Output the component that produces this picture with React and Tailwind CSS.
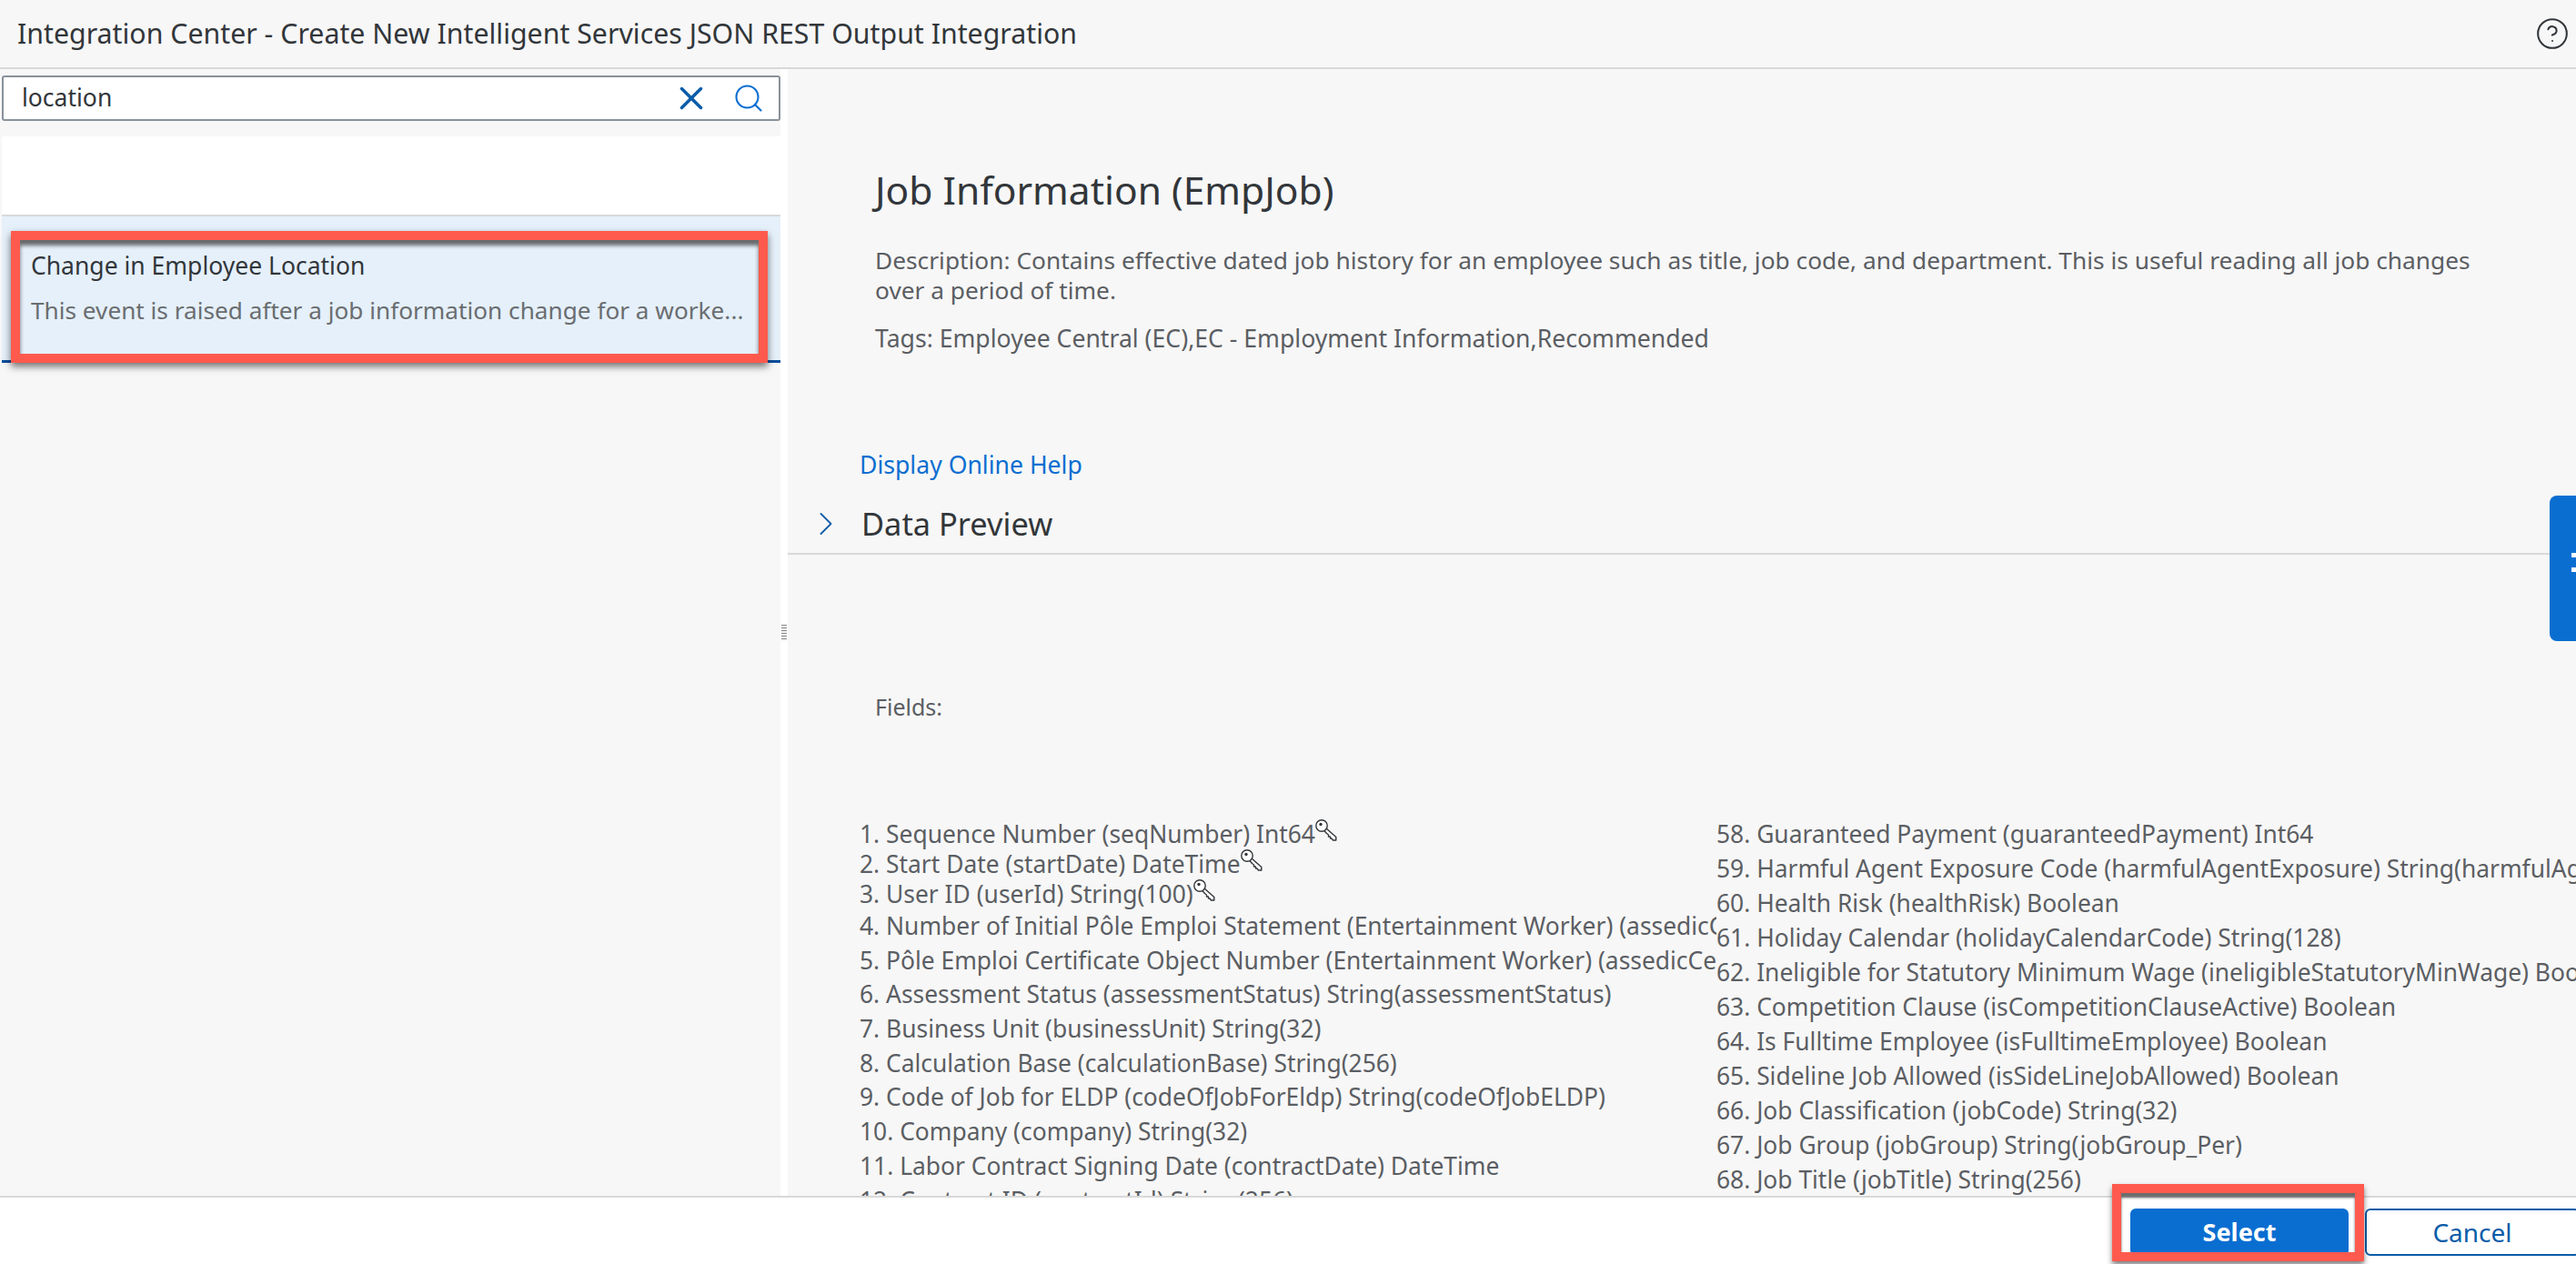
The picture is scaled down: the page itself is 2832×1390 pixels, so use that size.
import React from 'react';
import { X, Search, ChevronRight, CircleHelp } from 'lucide-react';

const leftFields = [
  ['1. Sequence Number (seqNumber) Int64', true],
  ['2. Start Date (startDate) DateTime', true],
  ['3. User ID (userId) String(100)', true],
  ['4. Number of Initial Pôle Emploi Statement (Entertainment Worker) (assedicCertInitialStatementNumber) String(256)'],
  ['5. Pôle Emploi Certificate Object Number (Entertainment Worker) (assedicCertObjectNumber) String(256)'],
  ['6. Assessment Status (assessmentStatus) String(assessmentStatus)'],
  ['7. Business Unit (businessUnit) String(32)'],
  ['8. Calculation Base (calculationBase) String(256)'],
  ['9. Code of Job for ELDP (codeOfJobForEldp) String(codeOfJobELDP)'],
  ['10. Company (company) String(32)'],
  ['11. Labor Contract Signing Date (contractDate) DateTime'],
  ['12. Contract ID (contractId) String(256)'],
];

const rightFields = [
  '58. Guaranteed Payment (guaranteedPayment) Int64',
  '59. Harmful Agent Exposure Code (harmfulAgentExposure) String(harmfulAgentExposure)',
  '60. Health Risk (healthRisk) Boolean',
  '61. Holiday Calendar (holidayCalendarCode) String(128)',
  '62. Ineligible for Statutory Minimum Wage (ineligibleStatutoryMinWage) Boolean',
  '63. Competition Clause (isCompetitionClauseActive) Boolean',
  '64. Is Fulltime Employee (isFulltimeEmployee) Boolean',
  '65. Sideline Job Allowed (isSideLineJobAllowed) Boolean',
  '66. Job Classification (jobCode) String(32)',
  '67. Job Group (jobGroup) String(jobGroup_Per)',
  '68. Job Title (jobTitle) String(256)',
];

const KeyIcon = () => (
  <svg viewBox="0 0 24 24" className="h-[24px] w-[24px] shrink-0" fill="white" stroke="#32363a" strokeWidth="1.4" strokeLinejoin="round">
    <path d="M11.5 9.5 22.8 19.5 22.8 23 19.5 23 18 21 16.5 21 16.5 19 14.5 19 14.5 17 12.5 15.5 9.5 12z" />
    <circle cx="7" cy="7" r="6.2" />
    <circle cx="6" cy="5.5" r="1.7" fill="#32363a" stroke="none" />
  </svg>
);

export default function App() {
  return (
    <div className="relative flex h-[1390px] w-[2832px] flex-col overflow-hidden bg-[#f7f7f7] font-['Noto_Sans',sans-serif] text-[#32363a]">
      {/* title bar */}
      <header className="flex h-[76px] shrink-0 items-center justify-between border-b-2 border-[#d9d9d9] pl-[19px] pr-[7px]">
        <h1 className="text-[30.3px] font-normal">Integration Center - Create New Intelligent Services JSON REST Output Integration</h1>
        <CircleHelp className="h-[38px] w-[38px]" strokeWidth={1.3} />
      </header>

      <main className="flex min-h-0 flex-1">
        {/* event list */}
        <aside className="w-[858px] shrink-0 pl-[2px] pt-[7px]">
          <div className="flex h-[50px] items-center rounded-[3px] border-2 border-[#89919a] bg-white pl-[20px] pr-[15px]">
            <span className="flex-1 text-[26.5px]">location</span>
            <X className="mr-[24px] h-[42px] w-[42px] text-[#0a5ca8]" strokeWidth={2} />
            <Search className="h-[36px] w-[36px] text-[#0a6ed1]" strokeWidth={1.4} />
          </div>
          <div className="mt-[17px] h-[88px] border-b-2 border-[#d9d9d9] bg-white" />
          <div className="relative h-[161px] border-b-[3px] border-[#0a4d9c] bg-[#e5f0fa] pl-[32px] pt-[36px]">
            <div className="text-[26.5px] leading-[36px]">Change in Employee Location</div>
            <div className="mt-[13px] text-[26.2px] leading-[36px] text-[#6a6d70]">This event is raised after a job information change for a worke...</div>
            <div className="absolute bottom-[-3px] left-[10px] right-[14px] top-[16px] border-[10px] border-[#ff5a4d] shadow-[0_4px_8px_rgba(0,0,0,0.55),inset_0_6px_4px_rgba(60,60,60,0.75)]" />
          </div>
        </aside>

        {/* sash */}
        <div className="flex w-[8px] shrink-0 items-center justify-center bg-white">
          <div className="h-[18px] w-[6px] bg-[repeating-linear-gradient(to_bottom,#8a8a8a_0,#8a8a8a_1px,#f2f2f2_1px,#f2f2f2_3px)]" />
        </div>

        {/* details */}
        <section className="relative min-w-0 flex-1 overflow-hidden">
          <div className="pl-[96px] pr-[110px] pt-[108px]">
            <h2 className="text-[42.5px] font-normal leading-[50px]">Job Information (EmpJob)</h2>
            <p className="mt-[36px] text-[26.3px] leading-[33px] text-[#5b5e63]">
              Description: Contains effective dated job history for an employee such as title, job code, and department. This is useful reading all job changes over a period of time.
            </p>
            <p className="mt-[20px] text-[26.6px] leading-[33px] text-[#5b5e63]">Tags: Employee Central (EC),EC - Employment Information,Recommended</p>
          </div>
          <div className="ml-[79px] mt-[104px] text-[26.6px] leading-[36px] text-[#0a6ed1]">Display Online Help</div>
          <div className="mt-[15px] flex h-[66px] items-center border-b-2 border-[#d9d9d9] pl-[20px]">
            <ChevronRight className="mr-[17px] h-[44px] w-[44px] text-[#0a5ca8]" strokeWidth={1} />
            <span className="text-[34.4px]">Data Preview</span>
          </div>
          <div className="ml-[96px] mt-[149px] text-[25px] leading-[36px] text-[#5b5e63]">Fields:</div>

          <div className="mt-[103px] grid grid-cols-[942px_1fr] pl-[79px] text-[26.4px] text-[#5b5e63]">
            <ul className="min-w-0 overflow-hidden pt-[3px]">
              {leftFields.map(([text, hasKey], i) => (
                <li key={text} className={`flex items-start whitespace-nowrap ${i < 3 ? 'h-[33px] leading-[33px]' : 'h-[37.7px] leading-[37.7px]'}`}>
                  <span>{text}</span>
                  {hasKey && <KeyIcon />}
                </li>
              ))}
            </ul>
            <ul className="min-w-0">
              {rightFields.map((text) => (
                <li key={text} className="h-[38px] whitespace-nowrap leading-[38px]">{text}</li>
              ))}
            </ul>
          </div>

          {/* side handle */}
          <div className="absolute right-0 top-[469px] flex h-[160px] w-[29px] flex-col gap-[11px] rounded-l-[8px] bg-[#0a6ed1] pl-[24px] pt-[63px]">
            <div className="h-[5px] w-[5px] bg-white" />
            <div className="h-[5px] w-[5px] bg-white" />
          </div>
        </section>
      </main>

      <footer className="relative z-10 flex h-[75px] shrink-0 items-start justify-end border-t-2 border-[#d9d9d9] bg-white pt-[12px]">
        <button className="mr-[18px] h-[52px] w-[240px] rounded-[6px] bg-[#0a6ed1] text-[27px] font-bold text-white">Select</button>
        <button className="mr-[-4px] h-[52px] w-[236px] rounded-[6px] border-2 border-[#0a5ca8] bg-white text-[28px] text-[#0a5ca8]">Cancel</button>
        <div className="absolute bottom-[3px] left-[2322px] top-[-15px] w-[277px] border-[10px] border-[#ff5a4d] shadow-[0_4px_6px_rgba(0,0,0,0.5),inset_0_5px_3px_rgba(60,60,60,0.75)]" />
      </footer>
    </div>
  );
}
